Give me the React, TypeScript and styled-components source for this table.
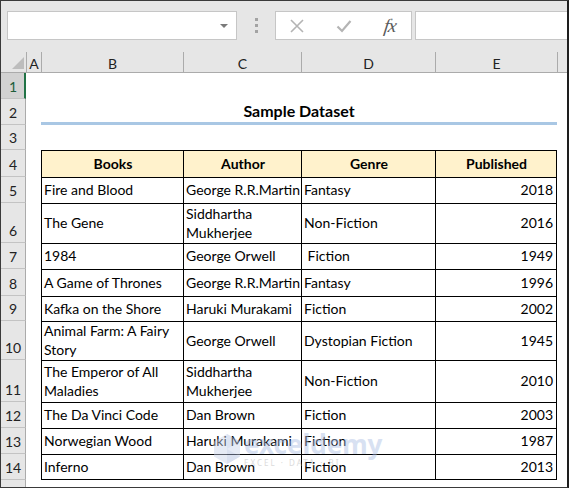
import React from "react";
import styled, { createGlobalStyle } from "styled-components";

const GlobalStyle = createGlobalStyle`
  html, body { margin: 0; padding: 0; background: #ffffff; }
  body { font-family: Lato, "Liberation Sans", Arial, sans-serif; }
  * { box-sizing: border-box; }
`;

const COLS = "25px 15px 142px 118px 134px 122px 1fr";

type Row = {
  book: string;
  author: string;
  genre: string;
  year: string;
  h: number;
};

const rows: Row[] = [
  { book: "Fire and Blood", author: "George R.R.Martin", genre: "Fantasy", year: "2018", h: 26 },
  { book: "The Gene", author: "Siddhartha\nMukherjee", genre: "Non-Fiction", year: "2016", h: 40 },
  { book: "1984", author: "George Orwell", genre: " Fiction", year: "1949", h: 26 },
  { book: "A Game of Thrones", author: "George R.R.Martin", genre: "Fantasy", year: "1996", h: 27 },
  { book: "Kafka on the Shore", author: "Haruki Murakami", genre: "Fiction", year: "2002", h: 25 },
  { book: "Animal Farm: A Fairy\nStory", author: "George Orwell", genre: "Dystopian Fiction", year: "1945", h: 39 },
  { book: "The Emperor of All\nMaladies", author: "Siddhartha\nMukherjee", genre: "Non-Fiction", year: "2010", h: 42 },
  { book: "The Da Vinci Code", author: "Dan Brown", genre: "Fiction", year: "2003", h: 26 },
  { book: "Norwegian Wood", author: "Haruki Murakami", genre: "Fiction", year: "1987", h: 26 },
  { book: "Inferno", author: "Dan Brown", genre: "Fiction", year: "2013", h: 26 },
];

const TOP_ROWS = [26, 26, 25, 27];
const ROW_TEMPLATE = [...TOP_ROWS, ...rows.map((r) => r.h), 26].map((h) => `${h}px`).join(" ");

const Frame = styled.div`
  position: relative;
  width: 569px;
  height: 488px;
  border-top: 1px solid #3a3a3a;
  border-left: 1px solid #3a3a3a;
  border-right: 2px solid #1e1e1e;
  border-bottom: 1px solid #3a3a3a;
  background: #ffffff;
  overflow: hidden;
  display: flex;
  flex-direction: column;
`;

const Toolbar = styled.div`
  height: 51px;
  flex: none;
  background: #e6e6e6;
  display: flex;
  align-items: flex-start;
  padding: 10px 0 0 6px;
`;

const NameBox = styled.div`
  position: relative;
  width: 230px;
  height: 29px;
  background: #ffffff;
  border: 1px solid #c6c6c6;
`;

const DropArrow = styled.span`
  position: absolute;
  right: 8px;
  top: 12px;
  width: 0;
  height: 0;
  border-left: 4px solid transparent;
  border-right: 4px solid transparent;
  border-top: 4px solid #7a7a7a;
`;

const DotsArea = styled.div`
  width: 38px;
  height: 29px;
  display: flex;
  flex-direction: column;
  align-items: center;
  justify-content: center;
  gap: 3px;
`;

const Dot = styled.span`
  width: 3px;
  height: 3px;
  background: #a3a3a3;
`;

const FxBox = styled.div`
  width: 137px;
  height: 29px;
  background: #ffffff;
  border: 1px solid #c6c6c6;
  display: flex;
  align-items: center;
  padding-left: 14px;
`;

const IconSlot = styled.div`
  width: 46px;
  height: 27px;
  display: flex;
  align-items: center;
  justify-content: flex-start;
`;

const FxText = styled.span`
  font-family: "Liberation Serif", "DejaVu Serif", serif;
  font-style: italic;
  font-size: 19px;
  color: #5a5a5a;
  margin-left: 2px;
  letter-spacing: -1px;
  transform: skewX(-8deg);
`;

const FormulaInput = styled.div`
  flex: 1;
  margin-left: 3px;
  height: 29px;
  background: #ffffff;
  border: 1px solid #c6c6c6;
  border-right: none;
`;

const ColumnHeaderRow = styled.div`
  display: grid;
  grid-template-columns: ${COLS};
  height: 21px;
  flex: none;
  background: #e6e6e6;
  border-bottom: 1px solid #ababab;
`;

const Corner = styled.div`
  position: relative;
`;

const CornerTriangle = styled.span`
  position: absolute;
  right: 2px;
  bottom: 3px;
  width: 0;
  height: 0;
  border-left: 12px solid transparent;
  border-bottom: 12px solid #bdbdbd;
`;

const ColHeader = styled.div`
  border-left: 1px solid #ababab;
  display: flex;
  align-items: center;
  justify-content: center;
  font-size: 14px;
  color: #222222;
  padding-top: 3px;
`;

const Sheet = styled.div`
  display: grid;
  grid-template-columns: ${COLS};
  grid-template-rows: ${ROW_TEMPLATE};
  flex: 1;
  align-content: start;
`;

const RowHeader = styled.div<{ $selected?: boolean }>`
  background: ${(p) => (p.$selected ? "#d2d2d2" : "#e6e6e6")};
  border-bottom: 1px solid #c3c3c3;
  border-right: ${(p) => (p.$selected ? "2px solid #217346" : "1px solid #ababab")};
  display: flex;
  align-items: flex-end;
  justify-content: center;
  padding-bottom: 3px;
  padding-left: ${(p) => (p.$selected ? "1px" : "0")};
  font-size: 14px;
  line-height: 17px;
  color: ${(p) => (p.$selected ? "#1f5d3a" : "#222222")};
  grid-column: 1;
  overflow: hidden;
`;

const Blank = styled.div<{ $span?: string }>`
  grid-column: ${(p) => p.$span || "auto"};
`;

const TitleCell = styled.div`
  grid-column: 3 / 7;
  display: flex;
  align-items: center;
  justify-content: center;
  font-weight: 700;
  font-size: 16px;
  color: #000000;
  border-bottom: 3px solid #a9c7e4;
`;

const Cell = styled.div<{
  $head?: boolean;
  $align?: "left" | "right" | "center";
  $last?: boolean;
  $bottom?: boolean;
}>`
  border-left: 1px solid #000000;
  border-top: 1px solid #000000;
  border-right: ${(p) => (p.$last ? "1px solid #000000" : "none")};
  border-bottom: ${(p) => (p.$bottom ? "1px solid #000000" : "none")};
  background: ${(p) => (p.$head ? "#fff2cc" : "#ffffff")};
  font-weight: ${(p) => (p.$head ? 700 : 400)};
  font-size: 14px;
  line-height: 19px;
  color: #000000;
  display: flex;
  align-items: center;
  justify-content: ${(p) =>
    p.$align === "right" ? "flex-end" : p.$align === "center" ? "center" : "flex-start"};
  text-align: ${(p) => p.$align || "left"};
  padding: ${(p) => (p.$align === "right" ? "0 3px 2px 2px" : "0 1px 2px 2px")};
  white-space: pre;
  overflow: hidden;
  min-height: 0;
`;

const Watermark = styled.div`
  position: absolute;
  left: 212px;
  top: 430px;
  display: flex;
  align-items: center;
  gap: 3px;
  opacity: 0.45;
  pointer-events: none;
`;

const WmTextBlock = styled.div`
  display: flex;
  flex-direction: column;
  align-items: flex-start;
`;

const WmName = styled.span`
  font-family: "Noto Sans", "Open Sans", sans-serif;
  font-weight: 700;
  font-size: 26px;
  line-height: 27px;
  color: #a9bde4;
`;

const WmTag = styled.span`
  font-family: "Noto Sans", sans-serif;
  font-size: 8px;
  line-height: 9px;
  letter-spacing: 2px;
  color: #b0b0b0;
`;

const CrossIcon = () => (
  <svg width="14" height="14" viewBox="0 0 14 14">
    <path d="M1 1 L13 13 M13 1 L1 13" stroke="#b4b4b4" strokeWidth="1.6" fill="none" />
  </svg>
);

const CheckIcon = () => (
  <svg width="16" height="14" viewBox="0 0 16 14">
    <path d="M1.5 7.5 L6 12 L14.5 2" stroke="#b4b4b4" strokeWidth="2.2" fill="none" />
  </svg>
);

const LogoIcon = () => (
  <svg width="28" height="32" viewBox="0 0 28 32">
    <path d="M14 1 L27 8.5 L27 23.5 L14 31 L1 23.5 L1 8.5 Z" fill="#c9d3ea" />
    <path d="M14 1 L27 8.5 L14 16 Z" fill="#b3c2e4" />
    <path d="M14 16 L27 23.5 L14 31 Z" fill="#aebde0" />
  </svg>
);

export default function App() {
  const lastIdx = rows.length - 1;
  return (
    <>
      <GlobalStyle />
      <Frame>
        <Toolbar>
          <NameBox>
            <DropArrow />
          </NameBox>
          <DotsArea>
            <Dot />
            <Dot />
            <Dot />
          </DotsArea>
          <FxBox>
            <IconSlot>
              <CrossIcon />
            </IconSlot>
            <IconSlot>
              <CheckIcon />
            </IconSlot>
            <FxText>fx</FxText>
          </FxBox>
          <FormulaInput />
        </Toolbar>

        <ColumnHeaderRow>
          <Corner>
            <CornerTriangle />
          </Corner>
          <ColHeader>A</ColHeader>
          <ColHeader>B</ColHeader>
          <ColHeader>C</ColHeader>
          <ColHeader>D</ColHeader>
          <ColHeader>E</ColHeader>
          <ColHeader />
        </ColumnHeaderRow>

        <Sheet>
          <RowHeader $selected>1</RowHeader>
          <Blank $span="2 / 8" />

          <RowHeader>2</RowHeader>
          <Blank />
          <TitleCell>Sample Dataset</TitleCell>
          <Blank />

          <RowHeader>3</RowHeader>
          <Blank $span="2 / 8" />

          <RowHeader>4</RowHeader>
          <Blank />
          <Cell $head $align="center">Books</Cell>
          <Cell $head $align="center">Author</Cell>
          <Cell $head $align="center">Genre</Cell>
          <Cell $head $align="center" $last>Published</Cell>
          <Blank />

          {rows.map((r, i) => (
            <React.Fragment key={r.book}>
              <RowHeader>{i + 5}</RowHeader>
              <Blank />
              <Cell $bottom={i === lastIdx}>{r.book}</Cell>
              <Cell $bottom={i === lastIdx}>{r.author}</Cell>
              <Cell $bottom={i === lastIdx}>{r.genre}</Cell>
              <Cell $align="right" $last $bottom={i === lastIdx}>
                {r.year}
              </Cell>
              <Blank />
            </React.Fragment>
          ))}

          <RowHeader />
          <Blank $span="2 / 8" />
        </Sheet>

        <Watermark>
          <LogoIcon />
          <WmTextBlock>
            <WmName>exceldemy</WmName>
            <WmTag>EXCEL · DATA · BI</WmTag>
          </WmTextBlock>
        </Watermark>
      </Frame>
    </>
  );
}
